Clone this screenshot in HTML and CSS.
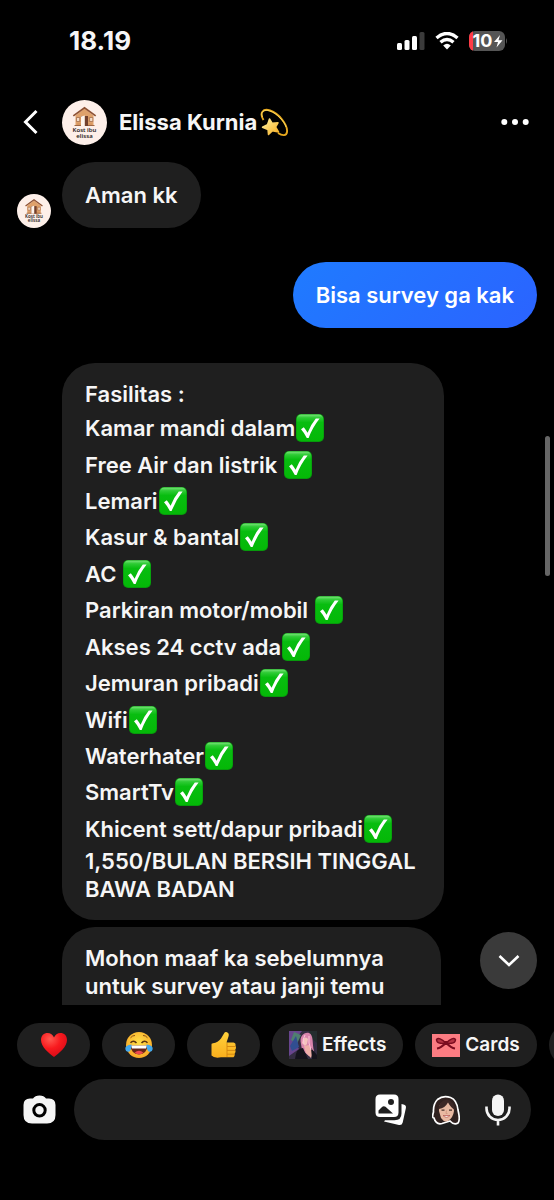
FILE: index.html
```html
<!DOCTYPE html>
<html lang="id">
<head>
<meta charset="utf-8">
<meta name="viewport" content="width=device-width, initial-scale=1">
<title>Elissa Kurnia</title>
<link rel="stylesheet" href="styles.css">
</head>
<body>
<svg class="defs" aria-hidden="true">
  <defs>
    <linearGradient id="green" x1="0" y1="0" x2="0" y2="1">
      <stop offset="0" stop-color="#7be37b"/><stop offset=".12" stop-color="#2ecb35"/><stop offset=".3" stop-color="#08bd10"/><stop offset="1" stop-color="#04b807"/>
    </linearGradient>
    <linearGradient id="star" x1="0" y1="0" x2="1" y2="1">
      <stop offset="0" stop-color="#fff3a0"/><stop offset="1" stop-color="#f5ad22"/>
    </linearGradient>
    <radialGradient id="red" cx=".35" cy=".25" r=".8">
      <stop offset="0" stop-color="#ff5a50"/><stop offset=".5" stop-color="#f81a1e"/><stop offset="1" stop-color="#d60a18"/>
    </radialGradient>
    <radialGradient id="face" cx=".5" cy=".4" r=".6">
      <stop offset="0" stop-color="#ffe04a"/><stop offset="1" stop-color="#f9a826"/>
    </radialGradient>
    <linearGradient id="hand" x1="0" y1="0" x2="0" y2="1">
      <stop offset="0" stop-color="#ffd23c"/><stop offset="1" stop-color="#f9ae1c"/>
    </linearGradient>
    <symbol id="check" viewBox="0 0 28 28">
      <rect width="28" height="28" rx="5" fill="#079a0c"/>
      <rect x=".7" y=".5" width="26.6" height="26.6" rx="4.5" fill="url(#green)"/>
      <path d="M5 15.200 7.800 13.200Q9.900 15.800 11.600 18.700 15.300 10 19.800 4.600L23.600 4.600Q16.600 13.500 12.600 24L10.800 24Q8.400 19 5 15.200Z" fill="#fff"/>
    </symbol>
    <symbol id="avatar" viewBox="0 0 45 45">
      <circle cx="22.500" cy="22.500" r="22.500" fill="#fdefe9"/>
      <path d="M13.500 15.500 22.500 8.500 31.500 15.500V26H13.500Z" fill="#dfa16b"/>
      <path d="M15 18H30M15 21H30M15 24H30" stroke="#c98750" stroke-width=".6"/>
      <path d="M11.300 15.900 22.500 7.700 33.700 15.900" fill="none" stroke="#8d5134" stroke-width="1.700"/>
      <path d="M12.500 25.500H32.500" stroke="#9d6543" stroke-width="1"/>
      <path d="M14.500 17.500H17.700V21.500H14.500ZM27.600 17.500H30.800V21.500H27.600Z" fill="#f3dcc8" stroke="#9d6543" stroke-width=".7"/>
      <path d="M19 16H26V26H19Z" fill="#73402c"/><path d="M19 16.500 22.800 15.500V26H19Z" fill="#fff5ec"/>
      <text x="22.500" y="32" class="logo-text">Kost ibu</text>
      <text x="22.500" y="37.500" class="logo-text">elissa</text>
    </symbol>
  </defs>
</svg>

<div class="phone">
  <div class="status">
    <time class="clock">18.19</time>
    <div class="status-icons">
      <svg width="28" height="18" viewBox="0 0 28 18" role="img" aria-label="Sinyal">
        <rect x="0" y="11" width="5" height="7" rx="1.500" fill="#fff"/><rect x="7.500" y="8" width="5" height="10" rx="1.500" fill="#fff"/><rect x="15" y="4" width="5" height="14" rx="1.500" fill="#fff"/><rect x="22.500" y="0" width="5" height="18" rx="1.500" fill="#3b3b3b"/>
      </svg>
      <svg width="24" height="18" viewBox="0 0 24 18" role="img" aria-label="Wi-Fi">
        <path d="M1.500 6Q12-3 22.500 6M5.500 10.300Q12 4.600 18.500 10.300" fill="none" stroke="#fff" stroke-width="3.400"/>
        <path d="M8.200 13.400Q12 10.200 15.800 13.400L12 17.500Z" fill="#fff"/>
      </svg>
      <svg width="39" height="20" viewBox="0 0 39 20" role="img" aria-label="Baterai 10 persen">
        <clipPath id="cell"><rect width="36" height="20" rx="6"/></clipPath>
        <g clip-path="url(#cell)"><rect width="36" height="20" fill="#555"/><rect width="4" height="20" fill="#ff3b46"/></g>
        <path d="M37 7Q39 10 37 13Z" fill="#555"/>
        <text x="3.500" y="16" class="battery-text">10</text>
        <path d="M31 4 25 11H29L27.500 16.500 33.500 9.300H29.500Z" fill="#fff"/>
      </svg>
    </div>
  </div>

  <header class="header">
    <button class="icon-button back" aria-label="Kembali">
      <svg width="16" height="26" viewBox="0 0 16 26"><path d="M13.500 2 2.500 13 13.500 24" fill="none" stroke="#fff" stroke-width="3"/></svg>
    </button>
    <svg class="avatar-large" role="img" aria-label="Kost ibu elissa"><use href="#avatar"/></svg>
    <h1 class="name">Elissa Kurnia</h1>
    <svg class="dizzy" width="29" height="29" viewBox="0 0 29 29" role="img" aria-label="Bintang pusing">
      <path d="M3.500 12C-1 5 3 0 10 2.500 19 5.500 28 17 27 24 26.500 28 22.500 28 18 25" fill="none" stroke="#e8a91e" stroke-width="1.900"/>
      <path d="M2.500 9C0 3.500 4 1 10 3 17 5.500 24 13 26 19" fill="none" stroke="#ffe269" stroke-width=".8"/>
      <path d="M9.500 11 12.200 15.300 18 14.800 15.500 19 18.500 24 12.500 22.800 8.500 26.500 8 21.500 2.500 19.200 7.500 16.800Z" fill="url(#star)" stroke="url(#star)" stroke-width="1.500" stroke-linejoin="round"/>
    </svg>
    <button class="icon-button more" aria-label="Lainnya">
      <svg width="28" height="8" viewBox="0 0 28 8"><g fill="#fff"><circle cx="3.300" cy="4" r="3"/><circle cx="14" cy="4" r="3"/><circle cx="24.700" cy="4" r="3"/></g></svg>
    </button>
  </header>

  <main class="chat">
    <div class="row">
      <svg class="avatar-small" role="img" aria-label="Kost ibu elissa"><use href="#avatar"/></svg>
      <p class="bubble">Aman kk</p>
    </div>
    <p class="bubble mine">Bisa survey ga kak</p>
    <div class="bubble long">
      <p>Fasilitas :</p>
      <ul class="facilities">
        <li>Kamar mandi dalam<svg class="tick"><use href="#check"/></svg></li>
        <li>Free Air dan listrik <svg class="tick"><use href="#check"/></svg></li>
        <li>Lemari<svg class="tick"><use href="#check"/></svg></li>
        <li>Kasur &amp; bantal<svg class="tick"><use href="#check"/></svg></li>
        <li>AC <svg class="tick"><use href="#check"/></svg></li>
        <li>Parkiran motor/mobil <svg class="tick"><use href="#check"/></svg></li>
        <li>Akses 24 cctv ada<svg class="tick"><use href="#check"/></svg></li>
        <li>Jemuran pribadi<svg class="tick"><use href="#check"/></svg></li>
        <li>Wifi<svg class="tick"><use href="#check"/></svg></li>
        <li>Waterhater<svg class="tick"><use href="#check"/></svg></li>
        <li>SmartTv<svg class="tick"><use href="#check"/></svg></li>
        <li>Khicent sett/dapur pribadi<svg class="tick"><use href="#check"/></svg></li>
      </ul>
      <p>1,550/BULAN BERSIH TINGGAL<br>BAWA BADAN</p>
    </div>
    <p class="bubble long continued">Mohon maaf ka sebelumnya<br>untuk survey atau janji temu</p>
    <div class="scrollbar"></div>
    <button class="jump" aria-label="Ke pesan terbaru">
      <svg width="22" height="14" viewBox="0 0 22 14"><path d="M1.500 2 11 11 20.500 2" fill="none" stroke="#fff" stroke-width="2.600"/></svg>
    </button>
  </main>

  <div class="chips">
    <button class="chip" aria-label="Hati">
      <svg width="28" height="26" viewBox="0 0 28 26"><path d="M14 25C9 21 1 15 1 8 1 3.500 4 1 7.500 1 10.500 1 13 3 14 5.500 15 3 17.500 1 20.500 1 24 1 27 3.500 27 8 27 15 19 21 14 25Z" fill="url(#red)"/></svg>
    </button>
    <button class="chip" aria-label="Tertawa">
      <svg width="28" height="28" viewBox="0 0 28 28"><circle cx="14" cy="14" r="13" fill="url(#face)"/><path d="M5.500 6.800Q7.500 4.300 10 4.500M22.500 6.800Q20.500 4.300 18 4.500" fill="none" stroke="#8a5011" stroke-width="1"/><path d="M5.500 11.800Q8.500 8.500 11.500 12M16.500 12Q19.500 8.500 22.500 11.800" fill="none" stroke="#5b3410" stroke-width="1.500"/><path d="M5.500 14.500H22.500Q22 23 14 23.500 6 23 5.500 14.500Z" fill="#682616"/><path d="M6 14.500H22L21 17.500H7Z" fill="#fff"/><path d="M9.500 21.800Q14 17.500 18.500 21.800 14 25 9.500 21.800Z" fill="#ed4a4f"/><path d="M6.500 13.500Q0 14 .3 18 .8 21.500 4 20.700 6.500 19.500 6.500 13.500ZM21.500 13.500Q28 14 27.700 18 27.200 21.500 24 20.700 21.500 19.500 21.500 13.500Z" fill="#43a9ed"/></svg>
    </button>
    <button class="chip" aria-label="Jempol">
      <svg width="27" height="28" viewBox="0 0 27 28"><path d="M1.500 13.500Q1 12.500 3 12.300 8 11.500 11 7.500L14 2.500Q15 .5 17 1.200 19.500 2.200 18.500 5.500L16.500 11.500H23.500Q26 12 25.500 14.500 26.500 16.500 25.300 18.500 26 20.500 24.700 22.500 25 25 23.500 26.300H11Q4 27.500 1.500 24.500Z" fill="url(#hand)"/><path d="M17 15.500H25.300M17 19.400H25M17 23.200H24.500M17 12V26" fill="none" stroke="#d08410" stroke-width=".9"/></svg>
    </button>
    <button class="chip labelled">
      <svg width="28" height="28" viewBox="0 0 28 28" aria-hidden="true"><rect width="28" height="28" fill="#332c42"/><path d="M0 0H13L5 10 10 18 0 25Z" fill="#68458e"/><path d="M5 1 12 4 8 13 2 9Z" fill="#4f7f70"/><path d="M20 0H28V12L23 8Z" fill="#242d2e"/><path d="M1 15 7 5 10 16 3 20Z" fill="#314e91"/><path d="M12 13C10 5 15 1 20 2 25 4 23 13 25 20L20 25 13 19Z" fill="#d884ac"/><path d="M14 8Q17 5 19 8L18 13 16 15 13 12Z" fill="#f3c3bd"/><path d="M15 15 20 14 24 21 22 27 17 22Z" fill="#edafa9"/><path d="M6 28Q7 17 14 17L19 28ZM22 17 28 24V28H23Z" fill="#14131c"/><path d="M16 4Q13 8 15 13M20 5Q19 12 22 19" fill="none" stroke="#ffc4dc" stroke-width="1"/></svg>
      Effects
    </button>
    <button class="chip labelled">
      <svg width="28" height="23" viewBox="0 0 28 23" aria-hidden="true"><rect width="28" height="23" fill="#fb7c82"/><path d="M14 9Q7 2.500 4.500 5.500 4.500 10.500 14 9ZM14 9Q21 2.500 23.500 5.500 23.500 10.500 14 9Z" fill="#b53544" stroke="#7b0d20" stroke-width="1.400"/><path d="M13.500 9Q9 14 5 14.500M14.500 9Q19 14 23 14.500" fill="none" stroke="#7b0d20" stroke-width="2.200"/><rect x="12" y="7" width="4" height="4" rx="1" fill="#7b0d20"/></svg>
      Cards
    </button>
    <button class="chip" aria-label="Lainnya"></button>
  </div>

  <form class="composer">
    <button type="button" class="icon-button camera" aria-label="Kamera">
      <svg width="33" height="29" viewBox="0 0 33 29"><path d="M10 3.500Q12 .5 16.500 .5T23 3.500H26Q32.500 3.500 32.500 10V20Q32.500 28.500 24 28.500H9Q.5 28.500 .5 20V10Q.5 3.500 7 3.500Z" fill="#f5f5f5"/><circle cx="16.500" cy="15.300" r="5.700" fill="none" stroke="#000" stroke-width="3"/></svg>
    </button>
    <div class="field">
      <input class="text" type="text" aria-label="Pesan">
      <button type="button" class="icon-button" aria-label="Galeri">
        <svg width="32" height="32" viewBox="0 0 32 32"><path fill-rule="evenodd" d="M5 .5H19Q23.500 .5 23.500 5V18.500Q23.500 23 19 23H5Q.5 23 .5 18.500V5Q.5 .5 5 .5ZM3.500 19.500H18L10.500 12.800Q8.500 11.500 6.500 13.500L3.500 16.500ZM16 5A3 3 0 1 0 16 11A3 3 0 1 0 16 5Z" fill="#fff"/><path d="M26.500 10 28.500 10.400Q31.500 11.200 30.900 14L27.700 28.500Q26.900 31.600 24 31L9 27.500 10 26.200H19.500Q26.500 26.200 26.500 19.500Z" fill="#fff"/></svg>
      </button>
      <button type="button" class="icon-button" aria-label="Stiker">
        <svg width="28" height="30" viewBox="0 0 28 30"><path d="M2 23Q-.5 23 1.500 17 1 9 5.500 4.500 11 0 18.500 2.500 25 5 26 15 28.500 25 26 28 22 30.500 18 26L10 28.500Q4 30 2 23Z" fill="#30211f" stroke="#fff" stroke-width="1.700"/><path d="M7 16Q6 7 14 6.500 22 6 22 16 21 23 16 26 12 27.500 9 23Z" fill="#e9b9a2"/><path d="M6 17Q6 6 15 4.500 22 6 23 15 19 13 16 7.500 13 13 7 14Z" fill="#3c2826"/><path d="M9.500 15.200H12.500M17 15.200H20" stroke="#47302b" stroke-width="1.300"/><path d="M11 20.500Q14.500 24 18 20.500Z" fill="#fff" stroke="#b95c55" stroke-width=".8"/><path d="M14.500 15.500 14 18.500H15.500" fill="none" stroke="#c98c77" stroke-width=".7"/></svg>
      </button>
      <button type="button" class="icon-button" aria-label="Rekam suara">
        <svg width="26" height="32" viewBox="0 0 26 32"><rect x="7" y=".5" width="12" height="21.500" rx="6" fill="#f5f5f5"/><path d="M1.500 12.500V14.500A11.500 11.500 0 0 0 24.500 14.500V12.500M13 26V31.500" fill="none" stroke="#f5f5f5" stroke-width="2.600"/></svg>
      </button>
    </div>
  </form>
</div>
</body>
</html>
```
FILE: styles.css
```css
* { box-sizing: border-box; }

body {
  margin: 0;
  background: #000;
  color: #f6f6f6;
  font: 600 22px/28px Inter, "Noto Sans", sans-serif;
}

p, h1, ul { margin: 0; padding: 0; }
svg { display: block; flex: none; }
button { font: inherit; color: inherit; border: 0; padding: 0; background: none; }

.defs { position: absolute; width: 0; height: 0; }
.logo-text { font: 600 6px "Noto Sans", sans-serif; text-anchor: middle; fill: #2a1c1a; }
.battery-text { font: 700 18px Inter, sans-serif; fill: #fff; }

.phone { display: flex; flex-direction: column; height: 100vh; overflow: hidden; }

.status { display: flex; align-items: center; justify-content: space-between; height: 82px; padding: 0 46px 0 69px; }
.clock { font-size: 26px; font-weight: 700; }
.status-icons { display: flex; align-items: center; gap: 10px; }

.header { display: flex; align-items: center; height: 80px; padding: 0 25px 0 17px; }
.icon-button { display: flex; align-items: center; justify-content: center; flex: none; }
.back { width: 28px; height: 44px; margin-right: 17px; }
.avatar-large { width: 45px; height: 45px; margin-right: 12px; }
.name { font-size: 22px; font-weight: 700; }
.dizzy { margin-left: 3px; }
.more { height: 44px; margin-left: auto; }

.chat { position: relative; flex: 1; overflow: hidden; display: flex; flex-direction: column; align-items: flex-start; padding: 0 17px; }
.row { display: flex; align-items: flex-end; gap: 11px; }
.avatar-small { width: 34px; height: 34px; }
.bubble { padding: 19px 23px; border-radius: 33px; background: #1f1f1f; }
.mine { align-self: flex-end; margin: 34px 0 35px; color: #fff; background: linear-gradient(135deg, #1f7bff, #2b63ff); }
.long { flex: none; margin: 0 0 7px 45px; padding: 17px 28px 17px 23px; }
.continued { padding-right: 57px; padding-bottom: 46px; }
.facilities { display: grid; grid-auto-rows: 1fr; align-items: center; min-height: 439px; padding-top: 2px; list-style: none; }
.facilities li { display: flex; align-items: center; white-space: pre; }
.tick { width: 28px; height: 28px; margin-left: 1px; }

.scrollbar { position: absolute; right: 4px; top: 274px; width: 5px; height: 140px; border-radius: 3px; background: #666; }
.jump { position: absolute; right: 17px; bottom: 16px; display: grid; place-items: center; width: 57px; height: 57px; border-radius: 50%; background: #3a3a3a; }

.chips { display: flex; gap: 12px; padding: 18px 0 12px 17px; overflow: hidden; }
.chip { display: flex; align-items: center; justify-content: center; flex: none; min-width: 73px; height: 44px; border-radius: 22px; background: #1f1f1f; font-size: 19px; }
.labelled { gap: 5px; padding: 0 17px; }

.composer { display: flex; align-items: center; gap: 18px; margin-bottom: 60px; padding: 0 23px; }
.field { display: flex; align-items: center; flex: 1; min-width: 0; gap: 25px; height: 61px; padding: 0 20px 0 24px; border-radius: 31px; background: #1f1f1f; }
.text { flex: 1; min-width: 0; border: 0; outline: 0; background: none; color: inherit; font: inherit; }
```
